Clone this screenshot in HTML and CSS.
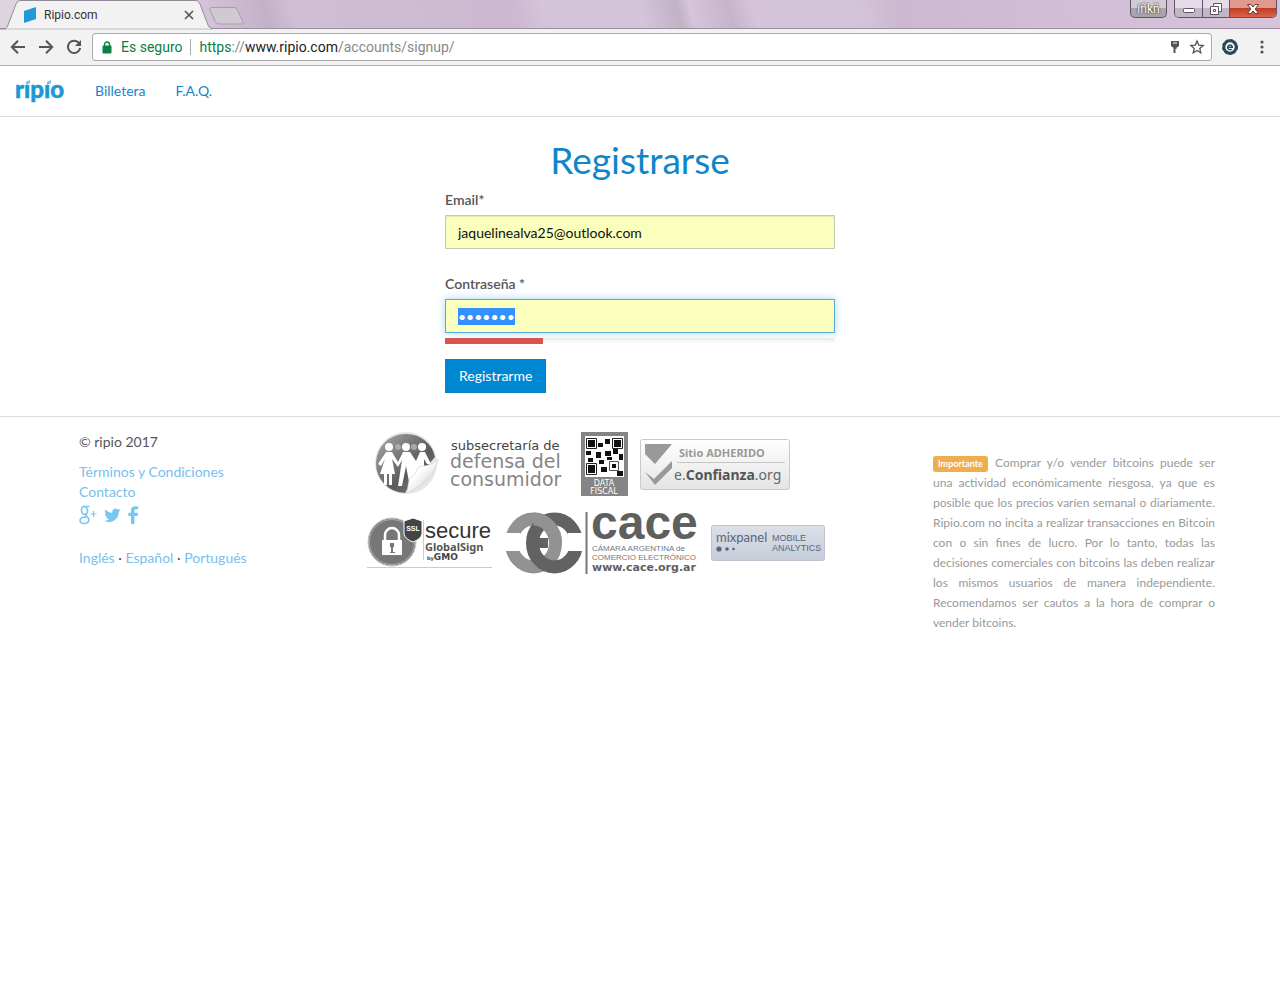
FILE: index.html
```html
<!DOCTYPE html>
<html lang="es">
<head>
<meta charset="utf-8">
<title>Ripio.com</title>
<meta name="viewport" content="width=device-width, initial-scale=1">
<link rel="stylesheet" href="styles.css">
</head>
<body>
<div class="browser">
  <div class="titlebar">
    <div class="tab">
      <svg class="tab-shape" width="212" height="29" viewBox="0 0 212 29" aria-hidden="true"><path d="M0 28.5H5.500C7 28 7.500 26 8 25L16 4Q17.500.5 20 .5H196Q198.500.5 200 4L208 25Q209.500 28.500 212 28.500V29H0Z" fill="#f2f2f2" stroke="#958b98"/><path d="M6 29H211" stroke="#f2f2f2"/></svg>
      <div class="tab-content">
        <svg width="14" height="16" viewBox="0 0 14 16" aria-hidden="true"><path d="M1 4 13 0V12L1 16Z" fill="#2199d8"/></svg>
        <span class="tab-title">Ripio.com</span>
        <button class="plain" aria-label="Cerrar pestaña"><svg width="10" height="10" viewBox="0 0 10 10"><path d="M1 1 9 9M9 1 1 9" stroke="#555" stroke-width="1.700"/></svg></button>
      </div>
    </div>
    <button class="plain new-tab" aria-label="Nueva pestaña"><svg width="36" height="18" viewBox="0 0 36 18"><path d="M3 .5H25Q27.500.5 28.500 3L34 15Q34.500 17 32.500 17H10Q7.500 17 6.500 15L1 3Q.5.5 3 .5Z" fill="#cfcad1" stroke="#a99dad"/></svg></button>
    <div class="window-controls">
      <button class="profile">iñkñ</button>
      <div class="window-buttons">
        <button class="win min" aria-label="Minimizar"><svg width="14" height="14" viewBox="0 0 14 14"><rect x="1.500" y="6.500" width="11" height="4" rx="1" fill="#fff" stroke="#5b5564"/></svg></button>
        <button class="win max" aria-label="Restaurar"><svg width="14" height="14" viewBox="0 0 14 14"><path d="M4.500 1.500H12.500V9.500H9.500V12.500H1.500V4.500H4.500Z" fill="#fff" stroke="#5b5564"/><path d="M4.500 4.500H9.500V9.500M4.500 7.500H6.500V9.500H4.500Z" fill="none" stroke="#5b5564"/></svg></button>
        <button class="win close" aria-label="Cerrar"><svg width="14" height="14" viewBox="0 0 14 14"><path d="M1.500 2.500H5L7 5 9 2.500H12.500L9.200 7 12.500 11.500H9L7 9 5 11.500H1.500L4.800 7Z" fill="#fff" stroke="#674046"/></svg></button>
      </div>
    </div>
  </div>
  <div class="toolbar">
    <div class="nav-buttons">
      <button class="plain" aria-label="Atrás"><svg width="16" height="14" viewBox="0 0 16 14"><path d="M15 7H2M8 .8 1.800 7 8 13.200" fill="none" stroke="#555" stroke-width="2"/></svg></button>
      <button class="plain" aria-label="Adelante"><svg width="16" height="14" viewBox="0 0 16 14"><path d="M1 7H14M8 .8 14.200 7 8 13.200" fill="none" stroke="#555" stroke-width="2"/></svg></button>
      <button class="plain" aria-label="Recargar"><svg width="16" height="16" viewBox="0 0 16 16"><path d="M13.400 4.600A6.200 6.200 0 1 0 14.200 9" fill="none" stroke="#555" stroke-width="2"/><path d="M15 1V7H9Z" fill="#555"/></svg></button>
    </div>
    <div class="omnibox">
      <svg width="10" height="13" viewBox="0 0 10 13" aria-hidden="true"><path d="M2.500 5V3.500A2.500 2.500 0 0 1 7.500 3.500V5" fill="none" stroke="#0b8043" stroke-width="1.400"/><rect x=".5" y="4.500" width="9" height="8" rx="1" fill="#0b8043"/></svg>
      <span class="secure-label">Es seguro</span>
      <div class="url" role="textbox" aria-label="Dirección"><span class="scheme">https</span>://<span class="host">www.ripio.com</span>/accounts/signup/</div>
      <button class="plain" aria-label="Contraseñas"><svg width="10" height="14" viewBox="0 0 10 14"><path d="M1 1H9V6L7 7.500H6.500V9H5.500V13H3.500V7.500H3L1 6Z" fill="#555"/><path d="M3 3H7" stroke="#fff"/></svg></button>
      <button class="plain" aria-label="Favorito"><svg width="14" height="14" viewBox="0 0 14 14"><path d="M7 1 8.700 5.100 13.200 5.500 9.800 8.400 10.800 12.800 7 10.500 3.200 12.800 4.200 8.400.8 5.500 5.300 5.100Z" fill="none" stroke="#555" stroke-width="1.300"/></svg></button>
    </div>
    <button class="plain" aria-label="Extensión"><svg width="16" height="16" viewBox="0 0 16 16"><circle cx="8" cy="8" r="6.200" fill="#fff" stroke="#294a57" stroke-width="3"/><circle cx="8" cy="8" r="7.500" fill="none" stroke="#294a57" stroke-dasharray="3 2"/><path d="M5.500 8.200H10.300A2.300 2.300 0 1 0 9.600 10" fill="none" stroke="#294a57" stroke-width="1.500"/></svg></button>
    <button class="plain menu" aria-label="Menú"><svg width="4" height="14" viewBox="0 0 4 14"><g fill="#555"><circle cx="2" cy="2" r="1.600"/><circle cx="2" cy="7" r="1.600"/><circle cx="2" cy="12" r="1.600"/></g></svg></button>
  </div>
</div>

<nav class="site-nav">
  <a class="brand" href="#" aria-label="ripio">
    <svg width="50" height="28" viewBox="0 0 50 28">
      <text class="brand-text" x="0" y="21">ripio</text>
      <path d="M9 0H17V8H9ZM30 0H38V8H30Z" fill="#fff"/>
      <path d="M11 5 15 3V6L11 8ZM32 5 36 3V6L32 8Z" fill="#6fc0e8"/>
    </svg>
  </a>
  <a href="#">Billetera</a>
  <a href="#">F.A.Q.</a>
</nav>

<main class="signup">
  <h1>Registrarse</h1>
  <form>
    <label for="email">Email*</label>
    <input class="field" id="email" type="email" value="jaquelinealva25@outlook.com">
    <label for="password">Contraseña *</label>
    <input class="field active" id="password" type="password" value="1234567" autofocus>
    <div class="strength"><div class="strength-bar"></div></div>
    <button class="submit" type="button">Registrarme</button>
  </form>
</main>

<footer class="footer">
  <div class="legal">
    <p>© ripio 2017</p>
    <a href="#">Términos y Condiciones</a><br>
    <a href="#">Contacto</a>
    <div class="social">
      <a href="#" aria-label="Google+"><svg width="18" height="20" viewBox="0 0 18 20"><g fill="none" stroke="#77c7f3" stroke-width="1.600"><ellipse cx="5.500" cy="5.500" rx="3" ry="4" transform="rotate(-12 5.500 5.500)"/><path d="M4 1.500H10.500M7.500 8.500C4 10.500 9.800 11 9.800 14.800 9.800 19.500 1 19.800 1 15.500 1 12.500 4.500 12 8 12"/><path d="M14.500 6V12M11.500 9H17.500" stroke-width="1.200"/></g></svg></a>
      <a href="#" aria-label="Twitter"><svg width="17" height="15" viewBox="0 0 17 15"><path d="M16.500 2.200A7 7 0 0 1 14.700 4C15 10 9.500 14.500 4 14 2.500 13.800 1.200 13.300.2 12.700A6.300 6.300 0 0 0 5.200 11.300 3.600 3.600 0 0 1 2 9H3.500A3.500 3.500 0 0 1 .8 5.500L2.400 6A3.500 3.500 0 0 1 1.400 1.500 9.600 9.600 0 0 0 8.200 5C7.500 1.200 12-.8 14.100 1.700L16.200.8A3.500 3.500 0 0 1 14.800 2.700Z" fill="#77c7f3"/></svg></a>
      <a href="#" aria-label="Facebook"><svg width="11" height="18" viewBox="0 0 11 18"><path d="M3 18V10H.3V6.800H3V4.300C3 1.500 4.700.2 7.300.2L10.200.4V3.200H8.400C7 3.200 6.500 3.800 6.500 5V6.800H10L9.500 10H6.500V18Z" fill="#77c7f3"/></svg></a>
    </div>
    <div class="languages"><a href="#">Inglés</a> · <a href="#">Español</a> · <a href="#">Portugués</a></div>
  </div>

  <div class="badges">
    <div class="badge-row">
      <svg width="202" height="64" viewBox="0 0 202 64" role="img" aria-label="Subsecretaría de defensa del consumidor">
        <defs>
          <linearGradient id="disc" x2="1" y2="1"><stop stop-color="#aaa"/><stop offset=".6" stop-color="#5c5c5c"/><stop offset="1" stop-color="#888"/></linearGradient>
          <linearGradient id="peel" x2="1" y2="1"><stop offset=".4" stop-color="#fff"/><stop offset="1" stop-color="#c2c2c2"/></linearGradient>
        </defs>
        <circle cx="39" cy="31" r="31" fill="#e6e6e6"/>
        <path d="M39 2A29 29 0 0 1 68 25L38 61A29 29 0 0 1 39 2Z" fill="url(#disc)"/>
        <g fill="#aaa"><circle cx="31" cy="15" r="3"/><circle cx="47" cy="15" r="3"/></g>
        <g fill="#fff"><circle cx="22" cy="15" r="4"/><circle cx="39" cy="15" r="4"/><circle cx="55" cy="15" r="4"/><path d="M19 20H25L31 30 36 20H43L49 29 53 20H58L64 32H60L57 27V36L43 55 39 34 35 54H31L35 28 31 35 25 27 28 42H25V53H22V42H20V53H17V42H13L18 27 14 34 11 32Z"/></g>
        <path d="M38 61C43 57 39 47 46 44 51 41 48 34 56 34 62 34 68 30 71 27 69 43 52 57 38 61Z" fill="url(#peel)" stroke="#ccc" stroke-width=".6"/>
        <g font-family="DejaVu Sans, sans-serif"><text x="84" y="18" font-size="13" fill="#444">subsecretaría de</text><text x="83" y="36" font-size="19" fill="#858585">defensa del</text><text x="83" y="54" font-size="19" fill="#858585">consumidor</text></g>
      </svg>
      <svg width="47" height="64" viewBox="0 0 47 64" role="img" aria-label="Data fiscal">
        <path d="M0 0H47V64H0Z" fill="#858585"/><path d="M4 4H43V45H4Z" fill="#fff"/>
        <g fill="none" stroke="#222"><path d="M5.500 6.500H15.500V16.500H5.500ZM31.500 6.500H41.500V16.500H31.500ZM5.500 31.500H15.500V42.500H5.500Z"/><path d="M28.500 29.500H37.500V38.500H28.500Z" stroke="#555"/></g>
        <path d="M7 8H14V15H7ZM33 8H40V15H33ZM7 33H14V41H7ZM17 11H22V15H17ZM24 7H29V12H24ZM5 19H10V23H5ZM15 20H20V26H15ZM24 19H30V24H24ZM32 17H37V22H32ZM38 22H42V28H38ZM7 26H12V30H7ZM18 28H23V32H18ZM26 25H31V28H26ZM20 35H26V40H20ZM31 32H35V36H31ZM36 39H42V44H36Z" fill="#111"/>
        <g font-family="DejaVu Sans, sans-serif" font-size="8" fill="#fff" text-anchor="middle"><text x="23" y="54">DATA</text><text x="23" y="62">FISCAL</text></g>
      </svg>
      <svg width="150" height="51" viewBox="0 0 150 51" role="img" aria-label="Sitio adherido e.Confianza.org">
        <defs><linearGradient id="plate" x2="0" y2="1"><stop stop-color="#fff"/><stop offset="1" stop-color="#e4e4e4"/></linearGradient></defs>
        <rect x=".5" y=".5" width="149" height="50" rx="2" fill="url(#plate)" stroke="#c9c9c9"/>
        <path d="M5 5H32L15 25 5 15ZM5 33 14 40 32 22V29L15 46Z" fill="#999"/><path d="M37 23.500H145" stroke="#c5c5c5"/>
        <text x="39" y="18" font-family="Noto Sans, sans-serif" font-weight="700" font-size="11" fill="#999">Sitio ADHERIDO</text>
        <text x="34" y="41" font-family="Noto Sans, sans-serif" font-size="14" fill="#666">e.<tspan font-weight="700" fill="#555">Confianza</tspan>.org</text>
      </svg>
    </div>
    <div class="badge-row second">
      <svg width="126" height="52" viewBox="0 0 126 52" role="img" aria-label="SSL secure GlobalSign by GMO">
        <circle cx="25" cy="25" r="24" fill="#777" stroke="#ccc"/><circle cx="25" cy="25" r="22.500" fill="#777" stroke="#aaa"/>
        <path d="M18 25V18A7 7 0 0 1 32 18V25" fill="none" stroke="#fff" stroke-width="2.500"/><path d="M15 23H35V38H15Z" fill="#fff"/><path d="M23 26H27V30H26V35H28V36H23V35H24V30H23Z" fill="#777"/>
        <path d="M37 4 46 1 55 4V17Q54 22 46 25 38 22 37 17Z" fill="#444" stroke="#fff"/>
        <text x="46" y="14" text-anchor="middle" font-family="Liberation Sans, sans-serif" font-weight="700" font-size="7" fill="#fff">SSL</text>
        <path d="M56.500 3V43" stroke="#ccc"/><path d="M0 50.500H125" stroke="#ccc"/>
        <text x="58" y="21" font-family="Liberation Sans, sans-serif" font-size="22" fill="#333">secure</text>
        <text x="58" y="34" font-family="Noto Sans, sans-serif" font-weight="700" font-size="11" fill="#555">GlobalSign</text>
        <text x="60" y="43" font-family="DejaVu Sans, sans-serif" font-weight="700" font-size="5" fill="#444">by<tspan font-size="9">GMO</tspan></text>
      </svg>
      <svg width="194" height="62" viewBox="0 0 194 62" role="img" aria-label="CACE Cámara Argentina de Comercio Electrónico">
        <g fill="none" stroke-width="13"><ellipse cx="28.500" cy="31" rx="22" ry="24" stroke="#929292"/><ellipse cx="49.500" cy="31" rx="22" ry="24" stroke="#626262"/><path d="M28.500 7A22 24 0 0 1 50.500 31" stroke="#929292"/></g>
        <path d="M0 21H15V39H0ZM63 21H78V39H63Z" fill="#fff"/>
        <path d="M32 26H43V36H32Z" fill="#626262"/><path d="M81.500 0V62" stroke="#777" stroke-width="2"/>
        <g font-family="Liberation Sans, sans-serif" fill="#5f5f5f"><text x="86" y="27" font-size="48" font-weight="700">cace</text><text x="87" y="39" font-size="8" fill="#777">CÁMARA ARGENTINA de</text><text x="87" y="48" font-size="8" fill="#777">COMERCIO ELECTRÓNICO</text></g>
        <text x="87" y="59" font-family="DejaVu Sans, sans-serif" font-size="11" font-weight="700" fill="#5f5f5f">www.cace.org.ar</text>
      </svg>
      <svg width="114" height="36" viewBox="0 0 114 36" role="img" aria-label="Mixpanel mobile analytics">
        <defs><linearGradient id="mix" x2="0" y2="1"><stop stop-color="#dbe0e9"/><stop offset="1" stop-color="#c7cdd8"/></linearGradient></defs>
        <rect x=".5" y=".5" width="113" height="35" rx="2" fill="url(#mix)" stroke="#bcc3ce"/>
        <text x="5" y="17" font-family="Lato, sans-serif" font-size="13" fill="#59657a">mixpanel</text>
        <g font-family="Liberation Sans, sans-serif" font-size="9" fill="#59657a"><text x="61" y="16">MOBILE</text><text x="61" y="26">ANALYTICS</text></g>
        <g fill="#59657a"><circle cx="8" cy="24" r="2.600"/><circle cx="16" cy="24" r="1.800"/><circle cx="22.500" cy="24" r="1.300"/></g>
      </svg>
    </div>
  </div>

  <p class="notice"><span class="tag">Importante</span> Comprar y/o vender bitcoins puede ser una actividad económicamente riesgosa, ya que es posible que los precios varíen semanal o diariamente. Ripio.com no incita a realizar transacciones en Bitcoin con o sin fines de lucro. Por lo tanto, todas las decisiones comerciales con bitcoins las deben realizar los mismos usuarios de manera independiente. Recomendamos ser cautos a la hora de comprar o vender bitcoins.</p>
</footer>
<script src="main.js"></script>
</body>
</html>
```
FILE: styles.css
```css
* { box-sizing: border-box; }
body { margin: 0; background: #fff; color: #555; font: 14px/20px Lato, sans-serif; }
a { color: #77bfed; text-decoration: none; }
svg { display: block; flex: none; overflow: visible; }
button { font: inherit; cursor: pointer; }
.plain { display: block; padding: 0; border: 0; background: none; }

.browser { font-family: Roboto, sans-serif; }
.titlebar { display: flex; align-items: flex-start; height: 29px; border-bottom: 1px solid #9a8ba0; background: linear-gradient(75deg, #ded4e0 0%, #d5c4d9 16%, #c3b1c8 21%, #d0bed5 23%, #cdbbd2 34%, #ccb8d1 40%, #d5c5da 43%, #d5c5da 50%, #c2b2c6 53%, #d5c4da 54%, #c5b4ca 57%, #d5c4da 59%, #d4c4d9 67%, #ccb8d0 70%, #d3bfd7 86%, #d6c5da 100%); }
.tab { display: grid; height: 29px; }
.tab-shape, .tab-content { grid-area: 1 / 1; }
.tab-content { display: flex; align-items: center; gap: 7px; padding: 0 18px 0 23px; z-index: 1; }
.tab-title { flex: 1; color: #333; font-size: 12px; line-height: 16px; }
.new-tab { margin: 7px 0 0 -3px; }
.window-controls { display: flex; gap: 7px; margin-left: auto; padding-right: 3px; }
.profile { width: 37px; height: 18px; padding: 0; border: 1px solid #5b5564; border-top: 0; border-radius: 0 0 5px 5px; background: linear-gradient(#d2cad4 50%, #aaa2ad 50%); color: #fff; font-size: 12px; line-height: 16px; text-shadow: 0 0 1px #333, 0 0 2px #333; }
.window-buttons { display: flex; height: 18px; overflow: hidden; border: 1px solid #5b5564; border-top: 0; border-radius: 0 0 5px 5px; }
.win { display: flex; align-items: center; justify-content: center; width: 27px; padding: 0; border: 0; background: linear-gradient(#e6dce8 50%, #c3b5c8 50%); }
.win + .win { border-left: 1px solid #5b5564; }
.win.close { width: 47px; background: linear-gradient(#de9a8d 45%, #c33c25 50%, #d8654a); }
.toolbar { display: flex; align-items: center; height: 37px; padding-right: 16px; border-bottom: 1px solid #b0b0b0; background: #f2f2f2; }
.nav-buttons { display: flex; align-items: center; gap: 12px; padding: 0 10px; }
.omnibox { display: flex; flex: 1; align-items: center; height: 28px; margin-right: 10px; padding: 0 7px 0 9px; border: 1px solid #aaa; border-radius: 3px; background: #fff; font-size: 14px; }
.secure-label { margin-left: 9px; padding-right: 8px; border-right: 1px solid #aaa; color: #0b8043; line-height: 16px; }
.url { flex: 1; margin-left: 8px; color: #888; }
.scheme { color: #0b8043; }
.host { color: #222; }
.omnibox .plain + .plain { margin-left: 10px; }
.menu { margin-left: 22px; }

.site-nav { display: flex; align-items: center; gap: 30px; height: 51px; padding: 0 13px 0 15px; border-bottom: 1px solid #d9d9d9; }
.site-nav a { color: #1a84c7; }
.brand-text { fill: #1c98d5; stroke: #1c98d5; stroke-width: 0.5px; font: 900 24px Lato, sans-serif; }

.signup { width: 100%; max-width: 390px; margin: 0 auto; padding: 23px 0 23px; }
h1 { margin: 0 0 10px; color: #0f86ca; font-size: 37px; font-weight: 400; line-height: 40px; text-align: center; }
label { display: block; margin-bottom: 5px; font-weight: 600; }
.field { display: block; width: 100%; height: 34px; margin: 0 0 25px; padding: 6px 12px; border: 1px solid #c4c9b4; border-radius: 0; outline: 0; background: #faffbd; box-shadow: inset 0 1px 1px rgba(0, 0, 0, .08); color: #111; font: 14px Lato, sans-serif; }
.field.active { margin-bottom: 5px; border-color: #5ca9d8; box-shadow: 0 0 8px rgba(102, 190, 233, .6); }
.field::selection { background: #3390ff; color: #fff; }
.strength { height: 6px; margin-bottom: 15px; background: linear-gradient(#e9e9e9, #fff); }
.strength-bar { width: 25%; height: 6px; background: #d9534f; }
.submit { height: 34px; padding: 0 13px; border: 1px solid #0a80c6; background: #0087d1; color: #fff; }

.footer { display: grid; grid-template-columns: 288px 1fr 282px; padding: 15px 65px 20px 79px; border-top: 1px solid #ddd; }
.legal p { margin: 0 0 10px; }
.social { display: flex; align-items: center; gap: 7px; height: 26px; margin-bottom: 20px; }
.badges { display: flex; flex-direction: column; gap: 16px; }
.badge-row { display: flex; align-items: center; gap: 12px; }
.notice { margin: 21px 0 0; color: #999; font-size: 12px; text-align: justify; }
.tag { display: inline-block; margin-right: 1px; padding: 0 5px; border-radius: 3px; background: #f0ad4e; color: #fff; font-size: 9px; font-weight: 700; line-height: 16px; }
```
FILE: main.js
```javascript
const password = document.getElementById('password');
password.focus();
password.select();
```
